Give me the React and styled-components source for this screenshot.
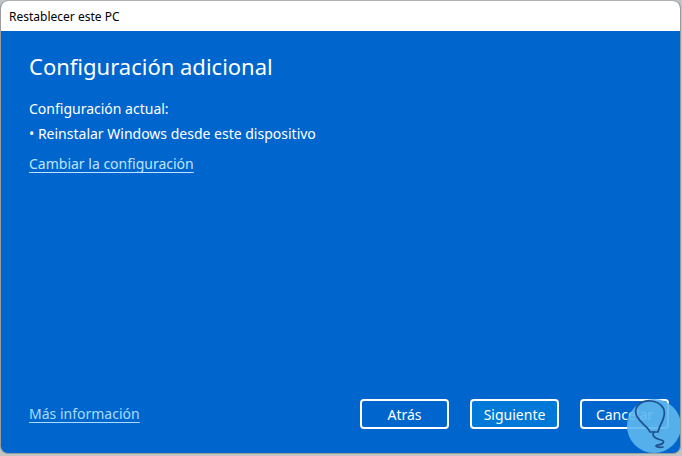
import React from "react";
import styled, { createGlobalStyle } from "styled-components";

const GlobalStyle = createGlobalStyle`
  html, body {
    margin: 0;
    padding: 0;
    background: #b9b9b9;
  }
  body {
    font-family: "Segoe UI", "Noto Sans", "Open Sans", sans-serif;
  }
`;

const Page = styled.div`
  width: 682px;
  height: 456px;
  overflow: hidden;
  background: #c4c4c4;
`;

const Window = styled.div`
  position: relative;
  width: 679px;
  height: 452px;
  display: flex;
  flex-direction: column;
  border: 1px solid #9c9c9c;
  border-top-color: #b0b0b0;
  border-radius: 8px;
  overflow: hidden;
  background: #0066cd;
`;

const TitleBar = styled.div`
  height: 30px;
  display: flex;
  align-items: center;
  padding-left: 8px;
  background: #ffffff;
  color: #000;
  font-size: 12px;
`;

const Body = styled.div`
  flex: 1;
  display: flex;
  flex-direction: column;
  padding: 20px 11px 24px 28px;
  color: #ffffff;
`;

const Heading = styled.h1`
  margin: 0 0 18px;
  font-size: 22px;
  font-weight: 400;
  line-height: 30px;
`;

const Line = styled.div`
  font-size: 14px;
  line-height: 20px;
  margin-bottom: ${(p) => p.$gap || 5}px;
`;

const Link = styled.a`
  color: ${(p) => (p.$light ? "#a8dcff" : "#bfe3ff")};
  font-size: 14px;
  line-height: 20px;
  text-decoration: underline;
  text-underline-offset: 3px;
  cursor: pointer;
`;

const Spacer = styled.div`
  flex: 1;
`;

const Footer = styled.div`
  display: flex;
  align-items: center;
  justify-content: space-between;
`;

const Buttons = styled.div`
  display: flex;
  gap: 21px;
`;

const Button = styled.button`
  width: 89px;
  height: 30px;
  border: 2px solid #ffffff;
  border-radius: 4px;
  background: ${(p) => (p.$primary ? "#0078d7" : "transparent")};
  color: #ffffff;
  font-family: inherit;
  font-size: 14px;
  padding: 0;
`;

const Badge = styled.svg`
  position: absolute;
  right: -4px;
  bottom: -2px;
`;

const Logo = () => (
  <Badge width="58" height="56" viewBox="0 0 58 56">
    <circle cx="28" cy="27" r="27" fill="#5db7ee" opacity="0.9" />
    <path
      d="M24 33 C22 27 12 23 10 15 C8 7 16 1 25 2 C34 3 40 9 38 17 C37 23 33 27 32 33 Z"
      fill="none"
      stroke="#1f4f8e"
      strokeWidth="1.7"
      strokeLinejoin="round"
    />
    <path
      d="M28 33 C25 37 30 40 35 41 C40 42 37 46 31 46 C28 47 32 49 37 48"
      fill="none"
      stroke="#1f4f8e"
      strokeWidth="1.7"
      strokeLinecap="round"
    />
  </Badge>
);

export default function App() {
  return (
    <Page>
      <GlobalStyle />
      <Window>
        <TitleBar>Restablecer este PC</TitleBar>
        <Body>
          <Heading>Configuración adicional</Heading>
          <Line>Configuración actual:</Line>
          <Line $gap={8}>• Reinstalar Windows desde este dispositivo</Line>
          <div>
            <Link>Cambiar la configuración</Link>
          </div>
          <Spacer />
          <Footer>
            <Link $light>Más información</Link>
            <Buttons>
              <Button>Atrás</Button>
              <Button $primary>Siguiente</Button>
              <Button>Cancelar</Button>
            </Buttons>
          </Footer>
        </Body>
        <Logo />
      </Window>
    </Page>
  );
}
